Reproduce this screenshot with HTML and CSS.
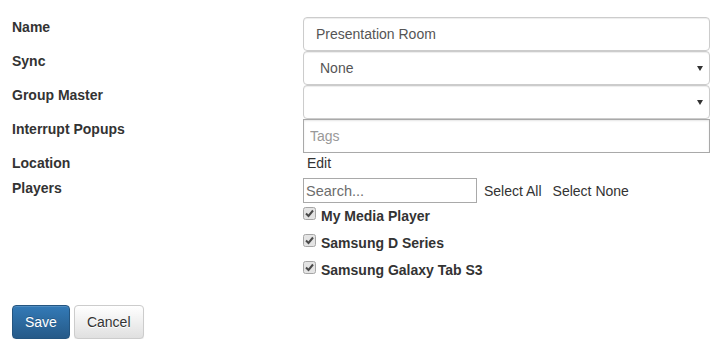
FILE: index.html
```html
<!DOCTYPE html>
<html lang="en">
<head>
    <meta charset="UTF-8">
    <meta name="viewport" content="width=device-width, initial-scale=1.0">
    <title>Edit Group</title>
    <link rel="stylesheet" href="styles.css">
</head>
<body>

    <form class="group-form">
        <div class="form-row">
            <label class="field-label">Name</label>
            <div class="field">
                <input type="text" class="form-control" value="Presentation Room">
            </div>
        </div>

        <div class="form-row">
            <label class="field-label">Sync</label>
            <div class="field select-wrap">
                <select class="form-control">
                    <option>None</option>
                </select>
                <span class="caret"></span>
            </div>
        </div>

        <div class="form-row">
            <label class="field-label">Group Master</label>
            <div class="field select-wrap">
                <select class="form-control">
                    <option></option>
                </select>
                <span class="caret"></span>
            </div>
        </div>

        <div class="form-row">
            <label class="field-label">Interrupt Popups</label>
            <div class="field">
                <input type="text" class="tags-input" placeholder="Tags">
            </div>
        </div>

        <div class="form-row location-row">
            <label class="field-label">Location</label>
            <div class="field">
                <a class="edit-link">Edit</a>
            </div>
        </div>

        <div class="form-row">
            <label class="field-label">Players</label>
            <div class="field">
                <div class="player-search">
                    <input type="text" class="search-input" placeholder="Search...">
                    <a class="select-link">Select All</a>
                    <a class="select-link">Select None</a>
                </div>
                <ul class="player-list">
                    <li class="player">
                        <span class="check">
                            <svg width="13" height="13" viewBox="0 0 13 13"><rect x="0.5" y="0.5" width="12" height="12" rx="2" fill="#e4e4e4" stroke="#a6a6a6"/><path d="M3 6.5 L5.5 9 L10 3.5" fill="none" stroke="#4a4a4a" stroke-width="2"/></svg>
                        </span>
                        My Media Player
                    </li>
                    <li class="player">
                        <span class="check">
                            <svg width="13" height="13" viewBox="0 0 13 13"><rect x="0.5" y="0.5" width="12" height="12" rx="2" fill="#e4e4e4" stroke="#a6a6a6"/><path d="M3 6.5 L5.5 9 L10 3.5" fill="none" stroke="#4a4a4a" stroke-width="2"/></svg>
                        </span>
                        Samsung D Series
                    </li>
                    <li class="player">
                        <span class="check">
                            <svg width="13" height="13" viewBox="0 0 13 13"><rect x="0.5" y="0.5" width="12" height="12" rx="2" fill="#e4e4e4" stroke="#a6a6a6"/><path d="M3 6.5 L5.5 9 L10 3.5" fill="none" stroke="#4a4a4a" stroke-width="2"/></svg>
                        </span>
                        Samsung Galaxy Tab S3
                    </li>
                </ul>
            </div>
        </div>

        <div class="form-actions">
            <button type="button" class="btn btn-primary">Save</button>
            <button type="button" class="btn btn-default">Cancel</button>
        </div>
    </form>

</body>
</html>
```

FILE: styles.css
```css
body {
    font-family: "Liberation Sans", Arial, sans-serif;
    font-size: 14px;
    line-height: 20px;
    color: #333;
    background-color: #fff;
    margin: 0;
}

.group-form {
    padding: 17px 0 0 12px;
}

.form-row {
    display: grid;
    grid-template-columns: 291px 407px;
}

.field-label {
    font-weight: bold;
    color: #333;
}

.field {
    position: relative;
}

.form-control {
    display: block;
    box-sizing: border-box;
    width: 100%;
    height: 34px;
    padding: 6px 12px;
    font-family: inherit;
    font-size: 14px;
    line-height: 20px;
    color: #555;
    background-color: #fff;
    border: 1px solid #ccc;
    border-radius: 4px;
    box-shadow: inset 0 1px 1px rgba(0, 0, 0, 0.075);
    outline: none;
}

select.form-control {
    appearance: none;
    -webkit-appearance: none;
    padding-left: 16px;
}

.caret {
    position: absolute;
    right: 7px;
    top: 15px;
    width: 0;
    height: 0;
    border-left: 3px solid transparent;
    border-right: 3px solid transparent;
    border-top: 5px solid #333;
}

.tags-input {
    display: block;
    box-sizing: border-box;
    width: 100%;
    height: 34px;
    padding: 6px 6px;
    font-family: inherit;
    font-size: 14px;
    color: #555;
    border: 1px solid #a9a9a9;
    border-radius: 0;
    box-shadow: inset 0 1px 2px rgba(0, 0, 0, 0.1);
    outline: none;
}

.tags-input::placeholder {
    color: #999;
}

.location-row {
    height: 25px;
}

.edit-link {
    display: inline-block;
    padding-left: 4px;
    color: #333;
    cursor: pointer;
}

.player-search {
    display: flex;
    align-items: center;
}

.search-input {
    box-sizing: border-box;
    width: 174px;
    height: 25px;
    padding: 1px 2px;
    margin-right: 7px;
    font-family: inherit;
    font-size: 14.5px;
    color: #555;
    border: 1px solid #a9a9a9;
    border-radius: 0;
    outline: none;
}

.search-input::placeholder {
    color: #6d6d6d;
}

.select-link {
    color: #333;
    margin-right: 11px;
    cursor: pointer;
}

.player-list {
    list-style: none;
    margin: 3px 0 0 0;
    padding: 0;
    display: flex;
    flex-direction: column;
    gap: 7px;
}

.player {
    display: flex;
    align-items: flex-start;
    font-weight: bold;
    color: #333;
}

.check {
    display: block;
    width: 13px;
    height: 13px;
    margin: 1px 5px 0 0;
}

.check svg {
    display: block;
}

.form-actions {
    margin-top: 25px;
    display: flex;
    gap: 4px;
}

.btn {
    box-sizing: border-box;
    height: 34px;
    padding: 6px 12px;
    font-family: inherit;
    font-size: 14px;
    line-height: 20px;
    border: 1px solid transparent;
    border-radius: 4px;
    cursor: pointer;
}

.btn-primary {
    color: #fff;
    background-image: linear-gradient(to bottom, #337ab7 0, #265a88 100%);
    border-color: #245580;
    text-shadow: 0 -1px 0 rgba(0, 0, 0, 0.2);
    box-shadow: inset 0 1px 0 rgba(255, 255, 255, 0.15), 0 1px 1px rgba(0, 0, 0, 0.075);
}

.btn-default {
    color: #333;
    background-image: linear-gradient(to bottom, #fff 0, #e0e0e0 100%);
    border-color: #ccc;
    text-shadow: 0 1px 0 #fff;
    box-shadow: inset 0 1px 0 rgba(255, 255, 255, 0.15), 0 1px 1px rgba(0, 0, 0, 0.075);
}
```
